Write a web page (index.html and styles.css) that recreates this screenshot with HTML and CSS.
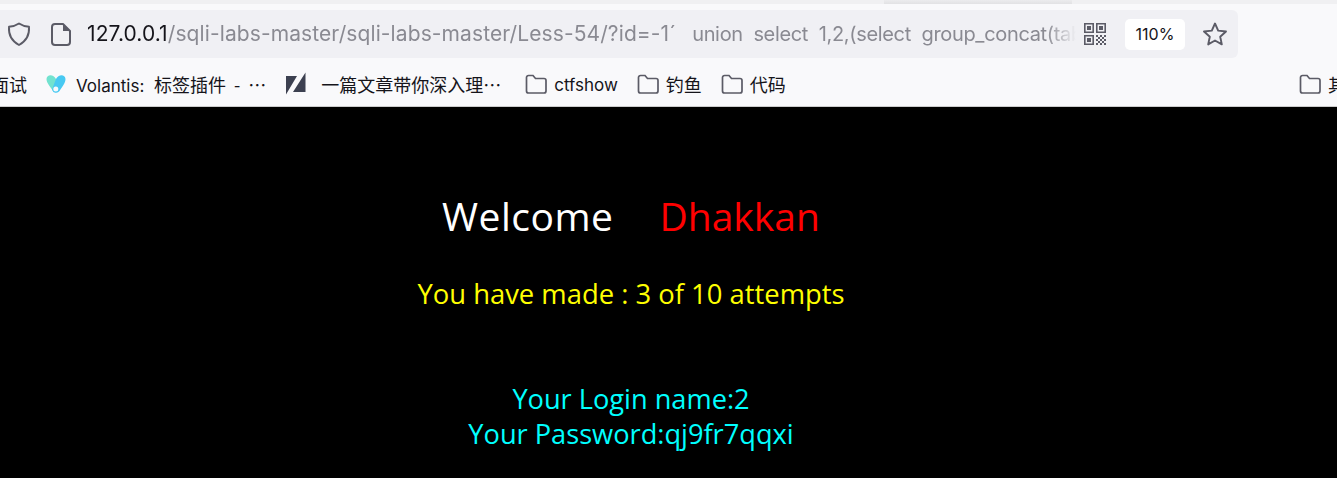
FILE: index.html
```html
<!DOCTYPE html>
<html>
<head>
    <meta charset="utf-8">
    <title>Less-54</title>
    <link rel="stylesheet" href="styles.css">
</head>
<body>
    <div class="top-strip"><div class="top-shadow"></div></div>
    <div class="toolbar">
        <div class="url-bar">
            <svg class="shield-icon" width="26" height="26" viewBox="0 0 26 26"><path d="M13 2.5 C15.5 4.2 19 5.4 23 5.8 C23.6 14 20.5 20 13 24 C5.5 20 2.4 14 3 5.8 C7 5.4 10.5 4.2 13 2.5 Z" fill="none" stroke="#5b5b66" stroke-width="1.9" stroke-linejoin="round"/></svg>
            <svg class="page-icon" width="22" height="26" viewBox="0 0 22 26"><path d="M5 3 H13 L20 10 V21 A3 3 0 0 1 17 24 H5 A3 3 0 0 1 2 21 V6 A3 3 0 0 1 5 3 Z" fill="none" stroke="#5b5b66" stroke-width="2" stroke-linejoin="round"/><path d="M13 3 L20 10 H13 Z" fill="#5b5b66"/></svg>
            <div class="url-text"><span class="host">127.0.0.1</span>/sqli-labs-master/sqli-labs-master/Less-54/?id=-1&#180;&nbsp; <span class="query">union&nbsp; select&nbsp; 1,2,(select&nbsp; group_concat(table_name)</span></div>
            <svg class="qr-icon" width="22" height="22" viewBox="0 0 22 22" fill="#5b5b66">
                <path d="M0 0H10V10H0Z M1.6 1.6V8.4H8.4V1.6Z" fill-rule="evenodd"/>
                <path d="M3 3H7V7H3Z"/>
                <path d="M12 0H22V10H12Z M13.6 1.6V8.4H20.4V1.6Z" fill-rule="evenodd"/>
                <path d="M15 3H19V7H15Z"/>
                <path d="M0 12H10V22H0Z M1.6 13.6V20.4H8.4V13.6Z" fill-rule="evenodd"/>
                <path d="M3 15H7V19H3Z"/>
                <path d="M12 12H14V14H12Z M16 12H18V14H16Z M20 12H22V14H20Z M14 14H16V16H14Z M18 14H20V16H18Z M12 16H14V18H12Z M16 16H18V18H16Z M20 16H22V18H20Z M14 18H16V20H14Z M18 18H20V20H18Z M12 20H14V22H12Z M16 20H18V22H16Z M20 20H22V22H20Z"/>
            </svg>
            <div class="zoom-badge">110%</div>
            <svg class="star-icon" width="26" height="26" viewBox="0 0 26 26"><path d="M13 2.5 L16.2 9.6 L24 10.5 L18.2 15.7 L19.8 23.4 L13 19.5 L6.2 23.4 L7.8 15.7 L2 10.5 L9.8 9.6 Z" fill="none" stroke="#5b5b66" stroke-width="1.9" stroke-linejoin="round"/></svg>
        </div>
    </div>
    <div class="bookmarks">
        <div class="bookmark-list">
            <span class="bookmark"><span class="zh">面试</span></span>
            <span class="bookmark">
                <svg width="20" height="20" viewBox="0 0 20 20"><path d="M10 5 C8 0.5 1 -0.5 0.5 5 C0.5 9 4 12.5 7 17 L10 12 Z" fill="#72e2cf"/><path d="M10 5 C12 0.5 19 -0.5 19.5 5 C19.5 9 16 13 13.5 17 A4.2 4.2 0 0 1 6 15.5 Z" fill="#48c9f2"/><circle cx="9.8" cy="15" r="2.5" fill="#f9f9fb"/></svg>
                <span>Volantis:&nbsp; <span class="zh">标签插件&nbsp; <span class="tail">-</span>…</span></span>
            </span>
            <span class="bookmark article">
                <svg width="20" height="24" viewBox="0 0 20 24"><path d="M0 4 H11 L0 22.5 Z M19.5 0.5 V20 H7 Z" fill="#3c4050"/></svg>
                <span class="zh">一篇文章带你深入理…</span>
            </span>
            <span class="bookmark folder-item"><svg width="22" height="20" viewBox="0 0 22 20"><path d="M3.5 1.5 H8 L10.5 4.5 H19 A2 2 0 0 1 21 6.5 V17 A2 2 0 0 1 19 19 H3.5 A2 2 0 0 1 1.5 17 V3.5 A2 2 0 0 1 3.5 1.5 Z" fill="none" stroke="#5b5b66" stroke-width="1.7"/></svg><span class="latin">ctfshow</span></span>
            <span class="bookmark folder-item"><svg width="22" height="20" viewBox="0 0 22 20"><path d="M3.5 1.5 H8 L10.5 4.5 H19 A2 2 0 0 1 21 6.5 V17 A2 2 0 0 1 19 19 H3.5 A2 2 0 0 1 1.5 17 V3.5 A2 2 0 0 1 3.5 1.5 Z" fill="none" stroke="#5b5b66" stroke-width="1.7"/></svg><span class="zh">钓鱼</span></span>
            <span class="bookmark folder-item"><svg width="22" height="20" viewBox="0 0 22 20"><path d="M3.5 1.5 H8 L10.5 4.5 H19 A2 2 0 0 1 21 6.5 V17 A2 2 0 0 1 19 19 H3.5 A2 2 0 0 1 1.5 17 V3.5 A2 2 0 0 1 3.5 1.5 Z" fill="none" stroke="#5b5b66" stroke-width="1.7"/></svg><span class="zh">代码</span></span>
        </div>
        <span class="bookmark folder-item other"><svg width="22" height="20" viewBox="0 0 22 20"><path d="M3.5 1.5 H8 L10.5 4.5 H19 A2 2 0 0 1 21 6.5 V17 A2 2 0 0 1 19 19 H3.5 A2 2 0 0 1 1.5 17 V3.5 A2 2 0 0 1 3.5 1.5 Z" fill="none" stroke="#5b5b66" stroke-width="1.7"/></svg><span class="zh">其他书签</span></span>
    </div>
    <div class="page">
        <div class="welcome"><span class="hello">Welcome</span><span class="name">Dhakkan</span></div>
        <div class="attempts">You have made : 3 of 10 attempts</div>
        <div class="login">
            <div>Your Login name:2</div>
            <div>Your Password:qj9fr7qqxi</div>
        </div>
    </div>
</body>
</html>
```

FILE: styles.css
```css
html, body {
    margin: 0;
    height: 478px;
    overflow: hidden;
    background: #000;
}
body {
    font-family: "Inter", "Noto Sans CJK SC", sans-serif;
}
.top-strip {
    height: 4px;
    background: #f0f0f2;
    overflow: hidden;
}
.top-shadow {
    width: 188px;
    height: 4px;
    margin-left: 884px;
    background: linear-gradient(#ececee, #e2e2e4);
}
.toolbar {
    height: 54px;
    box-sizing: border-box;
    padding-top: 6px;
    background: #f9f9fb;
}
.url-bar {
    width: 1238px;
    height: 48px;
    display: flex;
    align-items: center;
    box-sizing: border-box;
    background: #f0f0f4;
    border-radius: 0 6px 6px 0;
    color: #8a8a92;
}
.shield-icon {
    margin-left: 6px;
    flex-shrink: 0;
}
.page-icon {
    margin-left: 18px;
    flex-shrink: 0;
}
.url-text {
    width: 989px;
    margin-left: 15px;
    padding-bottom: 2px;
    flex-shrink: 0;
    overflow: hidden;
    white-space: nowrap;
    font-size: 21px;
    letter-spacing: 0.1px;
    -webkit-mask-image: linear-gradient(to left, transparent 0, #000 30px);
    mask-image: linear-gradient(to left, transparent 0, #000 30px);
}
.host {
    color: #15141a;
}
.query {
    margin-left: 4px;
    font-size: 20px;
    letter-spacing: -0.33px;
}
.qr-icon {
    margin-left: 8px;
    flex-shrink: 0;
}
.zoom-badge {
    width: 60px;
    height: 31px;
    margin-left: 19px;
    flex-shrink: 0;
    background: #fff;
    border-radius: 5px;
    color: #15141a;
    font-size: 16px;
    line-height: 31px;
    text-align: center;
}
.star-icon {
    margin-left: 17px;
    flex-shrink: 0;
}
.bookmarks {
    height: 49px;
    display: flex;
    justify-content: space-between;
    align-items: center;
    box-sizing: border-box;
    padding-top: 4px;
    background: #f9f9fb;
    border-bottom: 1px solid #ccc;
    overflow: hidden;
    color: #15141a;
    font-size: 17px;
}
.bookmark-list {
    display: flex;
    align-items: center;
    gap: 19px;
    margin-left: -9px;
}
.bookmark {
    display: flex;
    align-items: center;
    gap: 10px;
    white-space: nowrap;
}
.article {
    gap: 15px;
    margin-left: 1px;
    margin-right: 5px;
}
.folder-item {
    gap: 7px;
}
.latin {
    margin-top: 2px;
}
.zh {
    font-family: "Noto Sans CJK SC", sans-serif;
    font-size: 18px;
}
.tail {
    letter-spacing: 8px;
}
.other {
    margin-right: -63px;
}
.page {
    height: 370px;
    width: 1262px;
    background: #000;
    text-align: center;
    font-family: "Open Sans", "Noto Sans", sans-serif;
}
.welcome {
    padding-top: 82px;
    display: flex;
    justify-content: center;
    gap: 46px;
    color: #fff;
    font-size: 39px;
    line-height: 54px;
}
.hello {
    letter-spacing: 0.5px;
}
.name {
    color: #f00;
}
.attempts {
    margin-top: 32px;
    color: #ff0;
    font-size: 27.4px;
    line-height: 38px;
}
.login {
    margin-top: 68px;
    color: #0ff;
    font-size: 27.2px;
    line-height: 35px;
}
```
